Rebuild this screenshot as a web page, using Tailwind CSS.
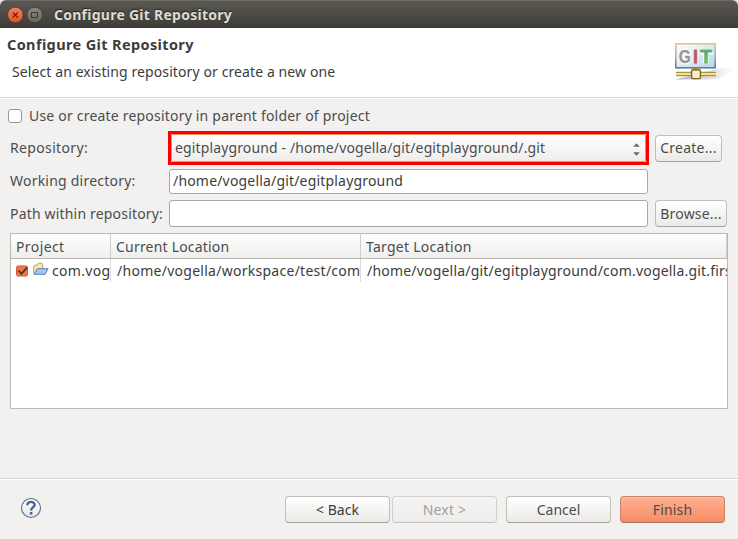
<!DOCTYPE html>
<html lang="en">
<head>
<meta charset="utf-8">
<title>Configure Git Repository</title>
<script src="https://cdn.jsdelivr.net/npm/@tailwindcss/browser@4"></script>
</head>
<body class="bg-[#e4e4ea]">
<div class="w-[738px] h-[539px] flex flex-col overflow-hidden rounded-t-[6px] bg-[#f2f1f0] text-[14px] leading-[20px] text-[#4c4c4c] whitespace-nowrap font-['Noto_Sans','Open_Sans',sans-serif]">
  <header class="h-[28px] shrink-0 flex items-center bg-linear-to-b from-[#5b5852] to-[#3d3c37] border-t border-[#6d6a64] pl-[7px] text-[#dfdbd2]">
    <svg class="w-[36px] h-[18px] shrink-0" viewBox="0 0 36 18">
      <defs>
        <linearGradient id="close" x2="0" y2="1"><stop stop-color="#f58361"/><stop offset="1" stop-color="#e24f20"/></linearGradient>
        <linearGradient id="max" x2="0" y2="1"><stop stop-color="#8b8981"/><stop offset="1" stop-color="#66645d"/></linearGradient>
      </defs>
      <circle cx="8.3" cy="9" r="7.8" fill="url(#close)" stroke="#35332e" stroke-width=".6"/>
      <path d="M5.8 6.5l5 5m0-5l-5 5" stroke="#5b2413" stroke-width="1.1"/>
      <circle cx="27.7" cy="9" r="7.8" fill="url(#max)" stroke="#35332e" stroke-width=".6"/>
      <rect x="24.5" y="6.5" width="6" height="5" fill="none" stroke="#3c3b37"/>
    </svg>
    <span class="ml-[11px] font-bold text-[14px] tracking-[0.26px] [text-shadow:0_-1px_1px_#222]">Configure Git Repository</span>
  </header>

  <section class="h-[70px] shrink-0 flex justify-between bg-white border-b border-[#d8d6d4] text-[#3c3c3c]">
    <div class="flex flex-col pl-[7px] pt-[6px]">
      <h1 class="font-bold text-[14.5px] tracking-[0.37px]">Configure Git Repository</h1>
      <p class="pl-[5px] mt-[8px] tracking-[0.1px]">Select an existing repository or create a new one</p>
    </div>
    <svg class="w-[64px] h-[44px] mt-[13px] shrink-0" viewBox="0 0 64 44">
      <defs>
        <linearGradient id="screen" x2="1" y2="1"><stop stop-color="#fff"/><stop offset=".5" stop-color="#dce9f4"/><stop offset="1" stop-color="#bcd3ea"/></linearGradient>
        <linearGradient id="frame" x2="0" y2="1"><stop stop-color="#e5bd83"/><stop offset=".5" stop-color="#a9b19b"/><stop offset="1" stop-color="#487c8b"/></linearGradient>
        <linearGradient id="shade"><stop stop-color="#b7b2c6"/><stop offset="1" stop-color="#fff"/></linearGradient>
        <linearGradient id="green" x2="0" y2="1"><stop stop-color="#4da95c"/><stop offset="1" stop-color="#86c58b"/></linearGradient>
      </defs>
      <path d="M1 38.5h36c9 0 17-4 23-11H44z" fill="url(#shade)"/>
      <rect x="1.8" y="2.8" width="39.4" height="24" fill="url(#screen)" stroke="url(#frame)" stroke-width="1.5"/>
      <g font-family="Liberation Sans, sans-serif" font-weight="bold" font-size="18">
        <g fill="#fff" stroke="#fff" stroke-width="3">
          <text x="4.7" y="21.6" textLength="12" lengthAdjust="spacingAndGlyphs" aria-hidden="true">G</text>
        </g>
        <text x="4.7" y="21.6" textLength="12" lengthAdjust="spacingAndGlyphs" fill="#979797" stroke="#979797" stroke-width=".4">G</text>
      </g>
      <path d="M18.7 8h5.6v14.6h-5.6zM25 8h14v5.2h-4v9.4h-6v-9.4h-4z" fill="#fff"/>
      <g font-family="Liberation Sans, sans-serif" font-weight="bold" font-size="18">
        <text x="19" y="21.6" fill="#c4585f" stroke="#c4585f" stroke-width=".8">I</text>
        <text x="26" y="21.6" textLength="12" lengthAdjust="spacingAndGlyphs" fill="url(#green)" stroke="#62b26c" stroke-width=".8">T</text>
      </g>
      <path d="M21.8 27v3" stroke="#b39b32" stroke-width="4"/>
      <rect x="2" y="31" width="40" height="4" fill="#ede39f"/>
      <path d="M2 31.4h40M2 34.6h40" stroke="#a99631" stroke-width="1.2"/>
      <rect x="17.6" y="28.8" width="8.8" height="8.8" rx="1" fill="#fcedc8" stroke="#7d681b" stroke-width="1.4"/>
    </svg>
  </section>

  <main class="flex flex-col h-[381px] shrink-0 border-t border-white border-b border-b-[#d6d4d2] px-[10px]">
    <label class="flex items-center h-[20px] mt-[7px] -ml-[2px]">
      <span class="w-[14px] h-[14px] rounded-[3px] bg-white border border-[#9c9893]"></span>
      <span class="ml-[7px] tracking-[0.2px]">Use or create repository in parent folder of project</span>
    </label>
    <div class="flex items-center h-[34px] mt-[5px]">
      <span class="w-[158px] tracking-[0.35px]">Repository:</span>
      <div class="w-[481px] h-[34px] border-3 border-[#fd0000]">
        <div class="h-full flex items-center justify-between rounded-[2px] border border-[#e98e66] bg-linear-to-b from-white to-[#eeedec] pl-[3px] pr-[5px]">
          <span class="tracking-[0.13px]">egitplayground - /home/vogella/git/egitplayground/.git</span>
          <svg class="w-[7px] h-[13px] mt-[2px]" viewBox="0 0 7 13"><path d="M.2 3.8l3.3-3.6 3.3 3.6zM.2 9.2h6.6l-3.3 3.6z" fill="#6b6a68"/></svg>
        </div>
      </div>
      <button class="ml-[6px] w-[67px] h-[27px] rounded-[4px] border border-[#c1beba] border-b-[#a5a19c] bg-linear-to-b from-white to-[#ebeae9] tracking-[0.25px]">Create...</button>
    </div>
    <div class="flex items-center h-[26px] mt-[3px]">
      <span class="w-[159px] tracking-[0.22px]">Working directory:</span>
      <div class="w-[479px] h-[25px] flex items-center rounded-[3px] bg-white border border-[#aaa6a1] pl-[3px] text-[#3c3c3c]"><span class="tracking-[0.18px]">/home/vogella/git/egitplayground</span></div>
    </div>
    <div class="flex items-center h-[27px] mt-[6px]">
      <span class="w-[159px] tracking-[0.18px]">Path within repository:</span>
      <div class="w-[479px] h-[27px] rounded-[3px] bg-white border border-[#aaa6a1]"></div>
      <button class="ml-[7px] w-[72px] h-[27px] rounded-[4px] border border-[#c1beba] border-b-[#a5a19c] bg-linear-to-b from-white to-[#ebeae9] tracking-[0.2px]">Browse...</button>
    </div>
    <div class="w-[718px] h-[176px] mt-[6px] bg-white border border-[#bdbab6]">
      <div class="grid grid-cols-[100px_250px_366px] h-[25px] bg-linear-to-b from-white to-[#efeeed] border-b border-[#b9b6b2]">
        <div class="pl-[5px] pt-[3px] border-r border-[#cfcdca]"><span class="tracking-[0.4px]">Project</span></div>
        <div class="pl-[5px] pt-[3px] border-r border-[#cfcdca]"><span class="tracking-[0.2px]">Current Location</span></div>
        <div class="pl-[5px] pt-[3px] border-r border-[#cfcdca]"><span class="tracking-[0.27px]">Target Location</span></div>
      </div>
      <div class="grid grid-cols-[100px_250px_366px] h-[23px] text-[#3c3c3c]">
        <div class="flex items-center pl-[5px] border-r border-[#dcdad8] overflow-hidden">
          <svg class="w-[12px] h-[12px] shrink-0" viewBox="0 0 12 12"><rect x=".5" y="1" width="11" height="10" rx="1.5" fill="#f07746" stroke="#c55a31"/><path d="M2.5 5.5l3 3.2L11 2.5" fill="none" stroke="#333" stroke-width="1.7"/></svg>
          <svg class="w-[16px] h-[14px] ml-[5px] -mt-[4px] shrink-0" viewBox="0 0 16 14">
            <path d="M.7 11.5V4l1.3-1h2l1.3-1.8h3.5l1 1.8v3.8" fill="#fae6a4" stroke="#b79c60" stroke-width=".9"/>
            <path d="M1 12.3l3.5-5.6h10.6L12 12.3z" fill="#a5c6f5" stroke="#476fb4" stroke-width=".9" stroke-linejoin="round"/>
          </svg>
          <span class="ml-[3px] tracking-[0.3px]">com.vog</span>
        </div>
        <div class="pl-[6px] pt-[2px] border-r border-[#dcdad8] overflow-hidden"><span class="tracking-[0.27px]">/home/vogella/workspace/test/com</span></div>
        <div class="pl-[6px] pt-[2px] overflow-hidden"><span class="tracking-[0.2px]">/home/vogella/git/egitplayground/com.vogella.git.firs</span></div>
      </div>
    </div>
  </main>

  <footer class="flex-1 flex items-start border-t border-white pt-[16px] pl-[20px]">
    <svg class="w-[22px] h-[22px] mt-px" viewBox="0 0 22 22">
      <defs><linearGradient id="help" x2="0" y2="1"><stop stop-color="#fff"/><stop offset="1" stop-color="#e4e6e6"/></linearGradient></defs>
      <circle cx="11" cy="11" r="9.5" fill="url(#help)" stroke="#596d90" stroke-width="1.1"/>
      <path d="M7.2 8.2C7.2 3.8 15 4 14.6 8.2C14.4 10.4 11.1 10.6 11.1 13.4" fill="none" stroke="#4b6088" stroke-width="2.3"/>
      <rect x="9.8" y="15" width="2.6" height="2.5" rx=".7" fill="#4b6088"/>
    </svg>
    <div class="flex ml-[243px]">
      <button class="w-[105px] h-[27px] rounded-[4px] border border-[#c1beba] border-b-[#a5a19c] bg-linear-to-b from-white to-[#ebeae9] text-[#3c3c3c] tracking-[0px]">&lt; Back</button>
      <button class="ml-[2px] w-[105px] h-[27px] rounded-[4px] border border-[#d2d0cd] border-b-[#c3c1be] bg-linear-to-b from-[#f5f4f4] to-[#eeedec] text-[#a2a09e] tracking-[0.2px]">Next &gt;</button>
      <button class="ml-[9px] w-[105px] h-[27px] rounded-[4px] border border-[#c1beba] border-b-[#a5a19c] bg-linear-to-b from-white to-[#ebeae9] tracking-[0px]">Cancel</button>
      <button class="ml-[9px] w-[105px] h-[27px] rounded-[4px] border border-[#c4846c] border-b-[#aa735e] bg-linear-to-b from-[#ffaf91] to-[#f58d65] shadow-[inset_0_1px_0_#ffc3ab] tracking-[0.15px]">Finish</button>
    </div>
  </footer>
</div>
</body>
</html>
